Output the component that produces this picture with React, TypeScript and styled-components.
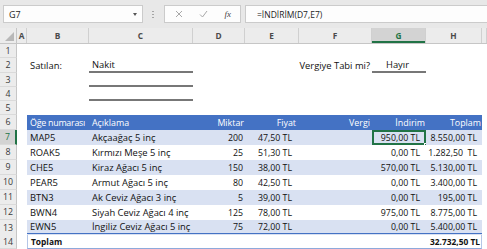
import React from 'react'
import styled, { createGlobalStyle, css } from 'styled-components'

const GlobalStyle = createGlobalStyle`
  html, body {
    margin: 0;
    padding: 0;
    background: #ffffff;
  }
  body {
    font-family: "Open Sans", "Liberation Sans", sans-serif;
  }
`

const COLS = '17px 10px 62px 104px 52px 54px 73px 54px 56px 1fr'

const Screen = styled.div`
  width: 487px;
  height: 249px;
  overflow: hidden;
  display: flex;
  flex-direction: column;
  background: #ffffff;
`

const Toolbar = styled.div`
  height: 28px;
  flex: none;
  display: flex;
  align-items: center;
  padding-left: 3px;
  background: #e8e8e8;
`

const NameBox = styled.div`
  width: 140px;
  height: 18px;
  box-sizing: border-box;
  display: flex;
  align-items: center;
  justify-content: space-between;
  padding: 0 5px 0 5px;
  background: #fdfdfd;
  border: 1px solid #cbcbcb;
  font-size: 9px;
  color: #222;
`

const Caret = styled.span`
  width: 0;
  height: 0;
  border-left: 2.5px solid transparent;
  border-right: 2.5px solid transparent;
  border-top: 3px solid #555;
`

const Grip = styled.div`
  width: 2px;
  height: 9px;
  margin: 0 10px 0 9px;
  background: radial-gradient(circle, #a5a5a5 0.8px, transparent 1px) 0 0 / 2px 3px repeat-y;
`

const ActionBox = styled.div`
  width: 77px;
  height: 18px;
  box-sizing: border-box;
  display: flex;
  align-items: center;
  justify-content: space-between;
  padding: 0 9px 0 10px;
  background: #fdfdfd;
  border: 1px solid #cbcbcb;
`

const Fx = styled.span`
  font-family: "Liberation Serif", serif;
  font-style: italic;
  font-size: 9px;
  color: #444;
`

const FormulaBox = styled.div`
  flex: 1;
  height: 18px;
  margin-left: 4px;
  box-sizing: border-box;
  display: flex;
  align-items: center;
  padding-left: 11px;
  background: #fdfdfd;
  border: 1px solid #cbcbcb;
  border-right: none;
  font-size: 8.5px;
  color: #222;
`

const Sheet = styled.div`
  flex: 1;
  display: flex;
  flex-direction: column;
`

const Row = styled.div<{ $h: number }>`
  display: grid;
  grid-template-columns: ${COLS};
  height: ${(p) => p.$h}px;
  flex: none;
`

const HeadRow = styled(Row)`
  background: #ececec;
  border-bottom: 1px solid #c6c6c6;
  box-sizing: border-box;
`

const Corner = styled.div`
  position: relative;
  border-right: 1px solid #c6c6c6;
  &::after {
    content: '';
    position: absolute;
    right: 2px;
    bottom: 2px;
    width: 0;
    height: 0;
    border-left: 9px solid transparent;
    border-bottom: 9px solid #b8b8b8;
  }
`

const ColLetter = styled.div<{ $active?: boolean }>`
  display: flex;
  align-items: center;
  justify-content: center;
  border-right: 1px solid #d0d0d0;
  font-size: 8.3px;
  font-weight: 700;
  color: #4a4a4a;
  ${(p) =>
    p.$active &&
    css`
      background: #d3d3d3;
      color: #217346;
      box-shadow: inset 0 -2px 0 #217346;
    `}
`

const RowNum = styled.div<{ $active?: boolean }>`
  display: flex;
  align-items: center;
  justify-content: center;
  background: #ececec;
  border-right: 1px solid #c6c6c6;
  border-bottom: 1px solid #dadada;
  box-sizing: border-box;
  font-size: 8.8px;
  color: #3a3a3a;
  ${(p) =>
    p.$active &&
    css`
      background: #d3d3d3;
      color: #217346;
      border-right: 2px solid #217346;
    `}
`

type Tone = 'plain' | 'head' | 'light' | 'white' | 'total'

const toneBg: Record<Tone, string> = {
  plain: 'transparent',
  head: '#4472c4',
  light: '#d9e1f2',
  white: '#ffffff',
  total: '#ffffff',
}

const sizeFor = (tone: Tone | undefined, num?: boolean) => {
  if (tone === 'total') return 8.4
  if (tone === 'head') return 8.9
  return num ? 8.8 : 9.4
}

const Cell = styled.div<{
  $tone?: Tone
  $align?: 'left' | 'right' | 'center'
  $pr?: number
  $num?: boolean
  $tight?: boolean
  $line?: boolean
  $double?: boolean
  $edge?: 'left' | 'right'
  $selected?: boolean
}>`
  position: relative;
  display: flex;
  align-items: center;
  min-width: 0;
  box-sizing: border-box;
  white-space: pre;
  overflow: visible;
  padding: 0 ${(p) => p.$pr ?? 3}px 0 3px;
  justify-content: ${(p) =>
    p.$align === 'right' ? 'flex-end' : p.$align === 'center' ? 'center' : 'flex-start'};
  background: ${(p) => toneBg[p.$tone ?? 'plain']};
  color: ${(p) => (p.$tone === 'head' ? '#ffffff' : '#111')};
  font-size: ${(p) => sizeFor(p.$tone, p.$num)}px;
  font-weight: ${(p) => (p.$tone === 'total' ? 700 : 400)};
  letter-spacing: ${(p) => (p.$tight ? '-0.25px' : 'normal')};
  ${(p) => p.$line && 'border-bottom: 2px solid #777;'}
  ${(p) => p.$double && 'border-bottom: 3px double #4472c4;'}
  ${(p) => p.$tone === 'total' && 'border-bottom: 1px solid #8ea9db;'}
  ${(p) => p.$edge === 'left' && 'border-left: 1px solid #b4c6e7;'}
  ${(p) => p.$edge === 'right' && 'border-right: 1px solid #b4c6e7;'}
  ${(p) =>
    p.$selected &&
    css`
      box-shadow: inset 0 0 0 2px #217346;
      &::after {
        content: '';
        position: absolute;
        right: -2px;
        bottom: -2px;
        width: 4px;
        height: 4px;
        background: #217346;
        border: 1px solid #fff;
        box-sizing: border-box;
      }
    `}
`

const letters = ['A', 'B', 'C', 'D', 'E', 'F', 'G', 'H', '']

const items = [
  ['MAP5', 'Akçaağaç 5 inç', '200', '47,50 TL', '950,00 TL', '8.550,00 TL'],
  ['ROAK5', 'Kırmızı Meşe 5 inç', '25', '51,30 TL', '0,00 TL', '1.282,50\u00a0\u00a0TL'],
  ['CHE5', 'Kiraz Ağacı 5 inç', '150', '38,00 TL', '570,00 TL', '5.130,00 TL'],
  ['PEAR5', 'Armut Ağacı 5 inç', '80', '42,50 TL', '0,00 TL', '3.400,00 TL'],
  ['BTN3', 'Ak Ceviz Ağacı 3 inç', '5', '39,00 TL', '0,00 TL', '195,00 TL'],
  ['BWN4', 'Siyah Ceviz Ağacı 4 inç', '125', '78,00 TL', '975,00 TL', '8.775,00 TL'],
  ['EWN5', 'İngiliz Ceviz Ağacı 5 inç', '75', '72,00 TL', '0,00 TL', '5.400,00 TL'],
]

const Blank = () => <Cell />

const App: React.FC = () => {
  return (
    <Screen>
      <GlobalStyle />
      <Toolbar>
        <NameBox>
          G7
          <Caret />
        </NameBox>
        <Grip />
        <ActionBox>
          <svg width="8" height="8" viewBox="0 0 8 8">
            <path d="M1 1L7 7M7 1L1 7" stroke="#a8a8a8" strokeWidth="1" />
          </svg>
          <svg width="9" height="8" viewBox="0 0 9 8">
            <path d="M1 4.5L3.5 7L8 1" stroke="#a8a8a8" strokeWidth="1" fill="none" />
          </svg>
          <Fx>fx</Fx>
        </ActionBox>
        <FormulaBox>=İNDİRİM(D7,E7)</FormulaBox>
      </Toolbar>

      <Sheet>
        <HeadRow $h={16}>
          <Corner />
          {letters.map((l, i) => (
            <ColLetter key={i} $active={l === 'G'}>
              {l}
            </ColLetter>
          ))}
        </HeadRow>

        <Row $h={14}>
          <RowNum>1</RowNum>
        </Row>
        <Row $h={15}>
          <RowNum>2</RowNum>
          <Blank />
          <Cell>Satılan:</Cell>
          <Cell $line>Nakit</Cell>
          <Blank />
          <Blank />
          <Cell $align="right" $pr={2}>
            Vergiye Tabi mi?
          </Cell>
          <Cell $line $align="center" $pr={6}>
            Hayır
          </Cell>
        </Row>
        <Row $h={14}>
          <RowNum>3</RowNum>
          <Blank />
          <Blank />
          <Cell $line />
        </Row>
        <Row $h={14}>
          <RowNum>4</RowNum>
          <Blank />
          <Blank />
          <Cell $line />
        </Row>
        <Row $h={14}>
          <RowNum>5</RowNum>
        </Row>

        <Row $h={15}>
          <RowNum>6</RowNum>
          <Blank />
          <Cell $tone="head" $pr={0} $tight>
            Öğe numarası
          </Cell>
          <Cell $tone="head">Açıklama</Cell>
          <Cell $tone="head" $align="right" $pr={1}>
            Miktar
          </Cell>
          <Cell $tone="head" $align="right" $pr={3}>
            Fiyat
          </Cell>
          <Cell $tone="head" $align="right" $pr={2}>
            Vergi
          </Cell>
          <Cell $tone="head" $align="right" $pr={1}>
            İndirim
          </Cell>
          <Cell $tone="head" $align="right" $pr={1}>
            Toplam
          </Cell>
        </Row>

        {items.map((it, i) => {
          const tone: Tone = i % 2 === 0 ? 'light' : 'white'
          const last = i === items.length - 1
          return (
            <Row $h={15} key={it[0]}>
              <RowNum $active={i === 0}>{7 + i}</RowNum>
              <Blank />
              <Cell $tone={tone} $double={last}>
                {it[0]}
              </Cell>
              <Cell $tone={tone} $double={last}>
                {it[1]}
              </Cell>
              <Cell $tone={tone} $double={last} $num $align="right" $pr={2}>
                {it[2]}
              </Cell>
              <Cell $tone={tone} $double={last} $num $align="right" $pr={7}>
                {it[3]}
              </Cell>
              <Cell $tone={tone} $double={last} />
              <Cell $tone={tone} $double={last} $num $align="right" $pr={6} $selected={i === 0}>
                {it[4]}
              </Cell>
              <Cell $tone={tone} $double={last} $num $align="right" $pr={5}>
                {it[5]}
              </Cell>
            </Row>
          )
        })}

        <Row $h={14}>
          <RowNum>14</RowNum>
          <Blank />
          <Cell $tone="total" $edge="left">
            Toplam
          </Cell>
          <Cell $tone="total" />
          <Cell $tone="total" />
          <Cell $tone="total" />
          <Cell $tone="total" />
          <Cell $tone="total" />
          <Cell $tone="total" $align="right" $pr={1} $edge="right">
            32.732,50 TL
          </Cell>
        </Row>
      </Sheet>
    </Screen>
  )
}

export default App
